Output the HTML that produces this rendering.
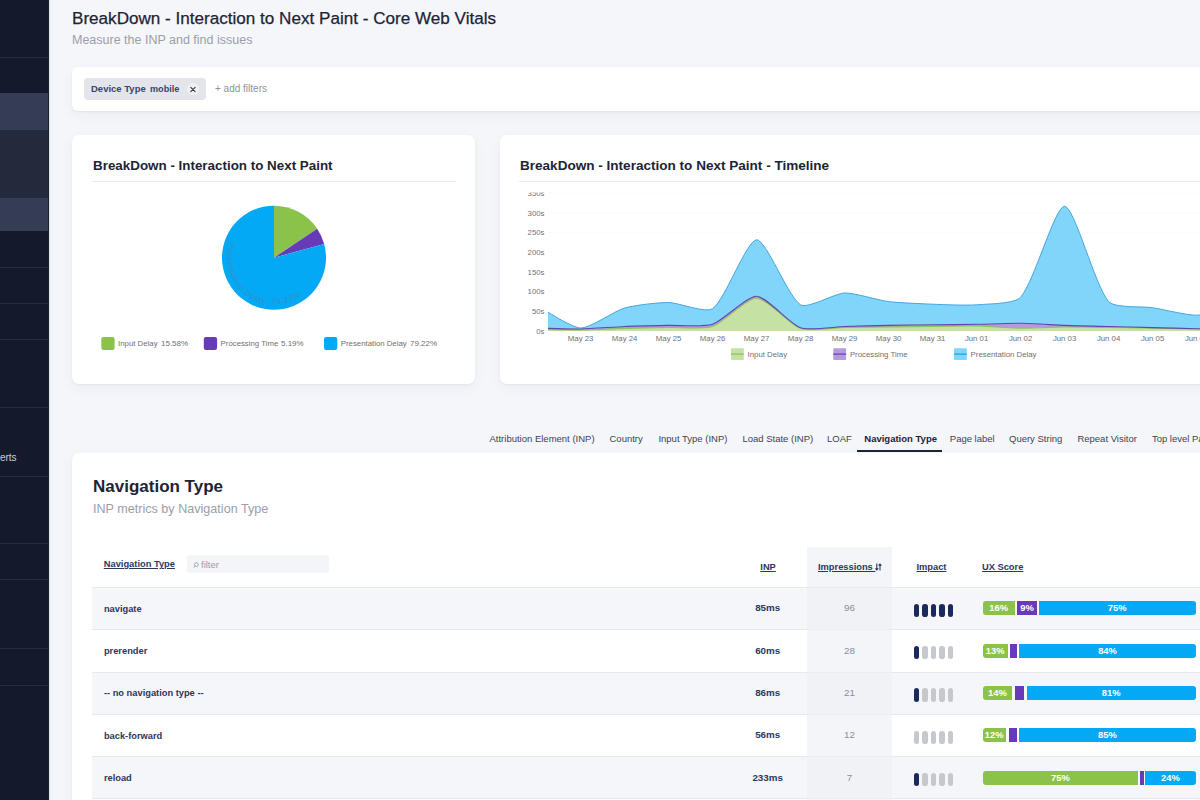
<!DOCTYPE html>
<html><head><meta charset="utf-8">
<style>
*{box-sizing:border-box;margin:0;padding:0}
html,body{width:1200px;height:800px;overflow:hidden}
body{background:#f5f6fa;font-family:"Liberation Sans",sans-serif;position:relative;color:#1c2233}
.a{position:absolute;white-space:nowrap}
#sb{position:absolute;left:0;top:0;width:49px;height:800px;background:#141a2b;border-right:1px solid #1c2130;box-shadow:1px 0 0 #e3e6ef,3px 0 3px #eef1fa}
#sb .ln{position:absolute;left:0;width:48px;height:1px;background:#262d41}
.card{position:absolute;background:#fff;border-radius:7px;box-shadow:0 1px 2px rgba(20,30,60,.05),0 4px 14px rgba(20,30,60,.045)}
</style></head><body>
<div id="sb">
  <div class="ln" style="top:57px"></div>
  <div style="position:absolute;left:0;top:93px;width:48px;height:37px;background:#343d53"></div>
  <div style="position:absolute;left:0;top:130px;width:48px;height:68px;background:#222a3b"></div>
  <div style="position:absolute;left:0;top:198px;width:48px;height:33px;background:#343d53"></div>
  <div class="ln" style="top:267px"></div>
  <div class="ln" style="top:303px"></div>
  <div class="ln" style="top:339px"></div>
  <div class="ln" style="top:407px"></div>
  <div class="a" style="left:-9px;top:452.2px;font-size:10px;color:#cbcfd9">Alerts</div>
  <div class="ln" style="top:476px"></div>
  <div class="ln" style="top:543px"></div>
  <div class="ln" style="top:579px"></div>
  <div class="ln" style="top:648px"></div>
  <div class="ln" style="top:685px"></div>
</div>

<div class="a" style="left:72px;top:8.6px;font-size:17.1px;color:#1d2433;-webkit-text-stroke:0.25px #1d2433">BreakDown - Interaction to Next Paint - Core Web Vitals</div>
<div class="a" style="left:72px;top:32.8px;font-size:12.5px;color:#9a9ea8">Measure the INP and find issues</div>

<!-- filter card -->
<div class="card" style="left:72px;top:67px;width:1150px;height:44px;border-radius:6px"></div>
<div class="a" style="left:84px;top:78px;width:122px;height:22px;background:#e3e5eb;border-radius:4px"></div>
<div class="a" style="left:91px;top:83px;font-size:9.5px;font-weight:bold;color:#3a4468">Device Type</div>
<div class="a" style="left:150px;top:84px;font-size:9.1px;font-weight:bold;color:#3a4468">mobile</div>
<div class="a" style="left:186.7px;top:83px;width:12px;height:12px;border-radius:50%;background:#eef0f3"></div>
<svg class="a" style="left:188px;top:84px" width="10" height="10" viewBox="188 84 10 10"><path d="M190.8 87.3 L195.1 91.6 M195.1 87.3 L190.8 91.6" stroke="#3a3d48" stroke-width="1.1" stroke-linecap="round"/></svg>
<div class="a" style="left:215px;top:83px;font-size:10px;color:#8d919b">+ add filters</div>

<!-- pie card -->
<div class="card" style="left:72px;top:135px;width:403px;height:249px"></div>
<div class="a" style="left:93px;top:157.5px;font-size:13.4px;font-weight:bold;color:#1d2433">BreakDown - Interaction to Next Paint</div>
<div class="a" style="left:92px;top:181px;width:364px;height:1px;background:#e8e9ee"></div>

<!-- timeline card -->
<div class="card" style="left:500px;top:135px;width:750px;height:249px"></div>
<div class="a" style="left:520px;top:157.5px;font-size:13.55px;font-weight:bold;color:#1d2433">BreakDown - Interaction to Next Paint - Timeline</div>
<div class="a" style="left:519px;top:181px;width:700px;height:1px;background:#e8e9ee"></div>

<!-- nav card -->
<div class="card" style="left:72px;top:453px;width:1150px;height:400px"></div>
<div class="a" style="left:93px;top:476.5px;font-size:17px;font-weight:bold;color:#1d2433">Navigation Type</div>
<div class="a" style="left:93px;top:501.5px;font-size:12.6px;color:#9a9ea8">INP metrics by Navigation Type</div>

<div class="a" style="left:489.5px;top:432.5px;font-size:9.5px;line-height:11px;color:#3d4251;;z-index:3">Attribution Element (INP)</div>
<div class="a" style="left:609.5px;top:432.5px;font-size:9.5px;line-height:11px;color:#3d4251;;z-index:3">Country</div>
<div class="a" style="left:658.4px;top:432.5px;font-size:9.5px;line-height:11px;color:#3d4251;;z-index:3">Input Type (INP)</div>
<div class="a" style="left:742.4px;top:432.5px;font-size:9.5px;line-height:11px;color:#3d4251;;z-index:3">Load State (INP)</div>
<div class="a" style="left:827.0px;top:432.5px;font-size:9.5px;line-height:11px;color:#3d4251;;z-index:3">LOAF</div>
<div class="a" style="left:864.3px;top:432.5px;font-size:9.5px;line-height:11px;color:#1d2433;font-weight:bold;z-index:3">Navigation Type</div>
<div class="a" style="left:949.8px;top:432.5px;font-size:9.5px;line-height:11px;color:#3d4251;;z-index:3">Page label</div>
<div class="a" style="left:1009.0px;top:432.5px;font-size:9.5px;line-height:11px;color:#3d4251;;z-index:3">Query String</div>
<div class="a" style="left:1077.4px;top:432.5px;font-size:9.5px;line-height:11px;color:#3d4251;;z-index:3">Repeat Visitor</div>
<div class="a" style="left:1151.9px;top:432.5px;font-size:9.5px;line-height:11px;color:#3d4251;;z-index:3">Top level Page</div>
<div class="a" style="left:857.4px;top:450px;width:85px;height:2px;background:#1d2433;z-index:3"></div>
<div class="a" style="left:806.5px;top:546.5px;width:85.5px;height:260px;background:#eef0f4;opacity:.65;z-index:2"></div>
<div class="a" style="left:103.8px;top:559px;font-size:9.3px;line-height:11px;font-weight:bold;color:#2c3760;text-decoration:underline;z-index:3">Navigation Type</div>
<div class="a" style="left:186.6px;top:555px;width:142.4px;height:18px;background:#f4f5f8;border-radius:3px;z-index:3"></div>
<div class="a" style="left:193px;top:558.5px;font-size:9.5px;line-height:11px;color:#9a9ea8;z-index:3"><svg width="6" height="8" viewBox="0 0 6 8" style="vertical-align:-1px;margin-right:2px"><circle cx="3.4" cy="3.6" r="1.9" fill="none" stroke="#9a9ea8" stroke-width="0.9"/><path d="M2 5 L0.8 6.6" stroke="#9a9ea8" stroke-width="0.9"/></svg>filter</div>
<div class="a" style="left:760.3px;top:562px;font-size:9.3px;line-height:11px;font-weight:bold;color:#2c3760;text-decoration:underline;z-index:3">INP</div>
<div class="a" style="left:818.0px;top:562px;font-size:9.3px;line-height:11px;font-weight:bold;color:#2c3760;text-decoration:underline;z-index:3">Impressions <svg width="7" height="8" viewBox="0 0 7 8" style="vertical-align:-0.5px"><path d="M1.8 0.5 V7 M0.4 5.4 L1.8 7 L3.2 5.4 M5 7.5 V1 M3.6 2.6 L5 1 L6.4 2.6" fill="none" stroke="#2c3760" stroke-width="1.1"/></svg></div>
<div class="a" style="left:916.5px;top:562px;font-size:9.3px;line-height:11px;font-weight:bold;color:#2c3760;text-decoration:underline;z-index:3">Impact</div>
<div class="a" style="left:982.0px;top:562px;font-size:9.3px;line-height:11px;font-weight:bold;color:#2c3760;text-decoration:underline;z-index:3">UX Score</div>
<div class="a" style="left:92.4px;top:587px;width:1120px;height:1px;background:#e7e8ec;z-index:3"></div>
<div class="a" style="left:92.4px;top:588.0px;width:1120px;height:42.3px;background:#f5f6f9;border-bottom:1px solid #e7e8ec;z-index:1"></div>
<div class="a" style="left:103.9px;top:603.7px;font-size:9.3px;line-height:11px;font-weight:bold;color:#2c3760;z-index:3">navigate</div>
<div class="a" style="left:727.7px;width:80px;text-align:center;top:602.4px;font-size:9.8px;line-height:11px;font-weight:bold;color:#2c3760;z-index:3">85ms</div>
<div class="a" style="left:809.5px;width:80px;text-align:center;top:602.4px;font-size:9.8px;line-height:11px;color:#8a8e99;z-index:3">96</div>
<div class="a" style="left:913.50px;top:603.8px;width:5.6px;height:13.4px;border-radius:2.8px;background:#1b2a5c;z-index:3"></div>
<div class="a" style="left:922.05px;top:603.8px;width:5.6px;height:13.4px;border-radius:2.8px;background:#1b2a5c;z-index:3"></div>
<div class="a" style="left:930.60px;top:603.8px;width:5.6px;height:13.4px;border-radius:2.8px;background:#1b2a5c;z-index:3"></div>
<div class="a" style="left:939.15px;top:603.8px;width:5.6px;height:13.4px;border-radius:2.8px;background:#1b2a5c;z-index:3"></div>
<div class="a" style="left:947.70px;top:603.8px;width:5.6px;height:13.4px;border-radius:2.8px;background:#1b2a5c;z-index:3"></div>
<div class="a" style="left:982.5px;top:601.4px;width:32.5px;height:14px;border-radius:3px 0 0 3px;background:#8bc34a;color:#fff;font-size:9.4px;line-height:14px;font-weight:bold;text-align:center;overflow:hidden;z-index:3">16%</div>
<div class="a" style="left:1017.3px;top:601.4px;width:19.4px;height:14px;border-radius:0;background:#673ab7;color:#fff;font-size:9.4px;line-height:14px;font-weight:bold;text-align:center;overflow:hidden;z-index:3">9%</div>
<div class="a" style="left:1038.6px;top:601.4px;width:157.2px;height:14px;border-radius:0 3px 3px 0;background:#03a9f4;color:#fff;font-size:9.4px;line-height:14px;font-weight:bold;text-align:center;overflow:hidden;z-index:3">75%</div>
<div class="a" style="left:92.4px;top:630.3px;width:1120px;height:42.3px;background:#ffffff;border-bottom:1px solid #e7e8ec;z-index:1"></div>
<div class="a" style="left:103.9px;top:646.0px;font-size:9.3px;line-height:11px;font-weight:bold;color:#2c3760;z-index:3">prerender</div>
<div class="a" style="left:727.7px;width:80px;text-align:center;top:644.7px;font-size:9.8px;line-height:11px;font-weight:bold;color:#2c3760;z-index:3">60ms</div>
<div class="a" style="left:809.5px;width:80px;text-align:center;top:644.7px;font-size:9.8px;line-height:11px;color:#8a8e99;z-index:3">28</div>
<div class="a" style="left:913.50px;top:646.1px;width:5.6px;height:13.4px;border-radius:2.8px;background:#1b2a5c;z-index:3"></div>
<div class="a" style="left:922.05px;top:646.1px;width:5.6px;height:13.4px;border-radius:2.8px;background:#c6c8ce;z-index:3"></div>
<div class="a" style="left:930.60px;top:646.1px;width:5.6px;height:13.4px;border-radius:2.8px;background:#c6c8ce;z-index:3"></div>
<div class="a" style="left:939.15px;top:646.1px;width:5.6px;height:13.4px;border-radius:2.8px;background:#c6c8ce;z-index:3"></div>
<div class="a" style="left:947.70px;top:646.1px;width:5.6px;height:13.4px;border-radius:2.8px;background:#c6c8ce;z-index:3"></div>
<div class="a" style="left:982.5px;top:643.7px;width:25.5px;height:14px;border-radius:3px 0 0 3px;background:#8bc34a;color:#fff;font-size:9.4px;line-height:14px;font-weight:bold;text-align:center;overflow:hidden;z-index:3">13%</div>
<div class="a" style="left:1010.0px;top:643.7px;width:7.2px;height:14px;border-radius:0;background:#673ab7;color:#fff;font-size:9.4px;line-height:14px;font-weight:bold;text-align:center;overflow:hidden;z-index:3"></div>
<div class="a" style="left:1019.3px;top:643.7px;width:176.5px;height:14px;border-radius:0 3px 3px 0;background:#03a9f4;color:#fff;font-size:9.4px;line-height:14px;font-weight:bold;text-align:center;overflow:hidden;z-index:3">84%</div>
<div class="a" style="left:92.4px;top:672.6px;width:1120px;height:42.3px;background:#f5f6f9;border-bottom:1px solid #e7e8ec;z-index:1"></div>
<div class="a" style="left:103.9px;top:688.3px;font-size:9.3px;line-height:11px;font-weight:bold;color:#2c3760;z-index:3">-- no navigation type --</div>
<div class="a" style="left:727.7px;width:80px;text-align:center;top:687.0px;font-size:9.8px;line-height:11px;font-weight:bold;color:#2c3760;z-index:3">86ms</div>
<div class="a" style="left:809.5px;width:80px;text-align:center;top:687.0px;font-size:9.8px;line-height:11px;color:#8a8e99;z-index:3">21</div>
<div class="a" style="left:913.50px;top:688.4px;width:5.6px;height:13.4px;border-radius:2.8px;background:#1b2a5c;z-index:3"></div>
<div class="a" style="left:922.05px;top:688.4px;width:5.6px;height:13.4px;border-radius:2.8px;background:#c6c8ce;z-index:3"></div>
<div class="a" style="left:930.60px;top:688.4px;width:5.6px;height:13.4px;border-radius:2.8px;background:#c6c8ce;z-index:3"></div>
<div class="a" style="left:939.15px;top:688.4px;width:5.6px;height:13.4px;border-radius:2.8px;background:#c6c8ce;z-index:3"></div>
<div class="a" style="left:947.70px;top:688.4px;width:5.6px;height:13.4px;border-radius:2.8px;background:#c6c8ce;z-index:3"></div>
<div class="a" style="left:982.5px;top:686.0px;width:29.7px;height:14px;border-radius:3px 0 0 3px;background:#8bc34a;color:#fff;font-size:9.4px;line-height:14px;font-weight:bold;text-align:center;overflow:hidden;z-index:3">14%</div>
<div class="a" style="left:1014.5px;top:686.0px;width:9.7px;height:14px;border-radius:0;background:#673ab7;color:#fff;font-size:9.4px;line-height:14px;font-weight:bold;text-align:center;overflow:hidden;z-index:3"></div>
<div class="a" style="left:1026.5px;top:686.0px;width:169.3px;height:14px;border-radius:0 3px 3px 0;background:#03a9f4;color:#fff;font-size:9.4px;line-height:14px;font-weight:bold;text-align:center;overflow:hidden;z-index:3">81%</div>
<div class="a" style="left:92.4px;top:714.9px;width:1120px;height:42.3px;background:#ffffff;border-bottom:1px solid #e7e8ec;z-index:1"></div>
<div class="a" style="left:103.9px;top:730.6px;font-size:9.3px;line-height:11px;font-weight:bold;color:#2c3760;z-index:3">back-forward</div>
<div class="a" style="left:727.7px;width:80px;text-align:center;top:729.3px;font-size:9.8px;line-height:11px;font-weight:bold;color:#2c3760;z-index:3">56ms</div>
<div class="a" style="left:809.5px;width:80px;text-align:center;top:729.3px;font-size:9.8px;line-height:11px;color:#8a8e99;z-index:3">12</div>
<div class="a" style="left:913.50px;top:730.7px;width:5.6px;height:13.4px;border-radius:2.8px;background:#c6c8ce;z-index:3"></div>
<div class="a" style="left:922.05px;top:730.7px;width:5.6px;height:13.4px;border-radius:2.8px;background:#c6c8ce;z-index:3"></div>
<div class="a" style="left:930.60px;top:730.7px;width:5.6px;height:13.4px;border-radius:2.8px;background:#c6c8ce;z-index:3"></div>
<div class="a" style="left:939.15px;top:730.7px;width:5.6px;height:13.4px;border-radius:2.8px;background:#c6c8ce;z-index:3"></div>
<div class="a" style="left:947.70px;top:730.7px;width:5.6px;height:13.4px;border-radius:2.8px;background:#c6c8ce;z-index:3"></div>
<div class="a" style="left:982.5px;top:728.3px;width:23.5px;height:14px;border-radius:3px 0 0 3px;background:#8bc34a;color:#fff;font-size:9.4px;line-height:14px;font-weight:bold;text-align:center;overflow:hidden;z-index:3">12%</div>
<div class="a" style="left:1008.7px;top:728.3px;width:8.1px;height:14px;border-radius:0;background:#673ab7;color:#fff;font-size:9.4px;line-height:14px;font-weight:bold;text-align:center;overflow:hidden;z-index:3"></div>
<div class="a" style="left:1018.9px;top:728.3px;width:176.9px;height:14px;border-radius:0 3px 3px 0;background:#03a9f4;color:#fff;font-size:9.4px;line-height:14px;font-weight:bold;text-align:center;overflow:hidden;z-index:3">85%</div>
<div class="a" style="left:92.4px;top:757.2px;width:1120px;height:42.3px;background:#f5f6f9;border-bottom:1px solid #e7e8ec;z-index:1"></div>
<div class="a" style="left:103.9px;top:772.9px;font-size:9.3px;line-height:11px;font-weight:bold;color:#2c3760;z-index:3">reload</div>
<div class="a" style="left:727.7px;width:80px;text-align:center;top:771.6px;font-size:9.8px;line-height:11px;font-weight:bold;color:#2c3760;z-index:3">233ms</div>
<div class="a" style="left:809.5px;width:80px;text-align:center;top:771.6px;font-size:9.8px;line-height:11px;color:#8a8e99;z-index:3">7</div>
<div class="a" style="left:913.50px;top:773.0px;width:5.6px;height:13.4px;border-radius:2.8px;background:#1b2a5c;z-index:3"></div>
<div class="a" style="left:922.05px;top:773.0px;width:5.6px;height:13.4px;border-radius:2.8px;background:#c6c8ce;z-index:3"></div>
<div class="a" style="left:930.60px;top:773.0px;width:5.6px;height:13.4px;border-radius:2.8px;background:#c6c8ce;z-index:3"></div>
<div class="a" style="left:939.15px;top:773.0px;width:5.6px;height:13.4px;border-radius:2.8px;background:#c6c8ce;z-index:3"></div>
<div class="a" style="left:947.70px;top:773.0px;width:5.6px;height:13.4px;border-radius:2.8px;background:#c6c8ce;z-index:3"></div>
<div class="a" style="left:982.5px;top:770.6px;width:155.8px;height:14px;border-radius:3px 0 0 3px;background:#8bc34a;color:#fff;font-size:9.4px;line-height:14px;font-weight:bold;text-align:center;overflow:hidden;z-index:3">75%</div>
<div class="a" style="left:1140.0px;top:770.6px;width:3.5px;height:14px;border-radius:0;background:#673ab7;color:#fff;font-size:9.4px;line-height:14px;font-weight:bold;text-align:center;overflow:hidden;z-index:3"></div>
<div class="a" style="left:1145.0px;top:770.6px;width:50.8px;height:14px;border-radius:0 3px 3px 0;background:#03a9f4;color:#fff;font-size:9.4px;line-height:14px;font-weight:bold;text-align:center;overflow:hidden;z-index:3">24%</div>
<svg class="a" style="left:0;top:0" width="1200" height="800" viewBox="0 0 1200 800"><line x1="548" x2="1200" y1="311.3" y2="311.3" stroke="#f7f8fa" stroke-width="0.8" stroke-dasharray="5 3"/>
<line x1="548" x2="1200" y1="291.6" y2="291.6" stroke="#f7f8fa" stroke-width="0.8" stroke-dasharray="5 3"/>
<line x1="548" x2="1200" y1="271.9" y2="271.9" stroke="#f7f8fa" stroke-width="0.8" stroke-dasharray="5 3"/>
<line x1="548" x2="1200" y1="252.2" y2="252.2" stroke="#f7f8fa" stroke-width="0.8" stroke-dasharray="5 3"/>
<line x1="548" x2="1200" y1="232.5" y2="232.5" stroke="#f7f8fa" stroke-width="0.8" stroke-dasharray="5 3"/>
<line x1="548" x2="1200" y1="212.8" y2="212.8" stroke="#f7f8fa" stroke-width="0.8" stroke-dasharray="5 3"/>
<line x1="548" x2="1200" y1="193.1" y2="193.1" stroke="#f7f8fa" stroke-width="0.8" stroke-dasharray="5 3"/>
<clipPath id="pc"><rect x="548" y="150" width="700" height="181.5"/></clipPath>
<g clip-path="url(#pc)">
<path d="M536.6 329.5 C536.6 329.5 570.9 330.1 580.6 330.0 C590.3 329.9 614.9 328.8 624.6 328.5 C634.3 328.2 658.9 327.7 668.6 327.5 C678.3 327.3 703.7 329.4 712.6 326.5 C723.1 323.0 747.0 298.1 756.6 298.3 C766.4 298.5 790.0 325.0 800.6 328.5 C809.3 331.4 834.9 327.7 844.6 327.5 C854.3 327.3 878.9 327.1 888.6 327.0 C898.3 326.9 922.9 326.6 932.6 326.5 C942.3 326.4 966.9 325.8 976.6 326.0 C986.3 326.2 1010.9 328.1 1020.6 328.2 C1030.3 328.3 1054.9 327.1 1064.6 327.0 C1074.3 326.9 1098.9 327.4 1108.6 327.5 C1118.3 327.6 1142.9 328.0 1152.6 328.2 C1162.3 328.4 1186.9 328.9 1196.6 329.0 C1206.3 329.1 1240.6 329.5 1240.6 329.5 L1240.6 331.0 C1240.6 331.0 1206.3 331.0 1196.6 331.0 C1186.9 331.0 1162.3 331.0 1152.6 331.0 C1142.9 331.0 1118.3 331.0 1108.6 331.0 C1098.9 331.0 1074.3 331.0 1064.6 331.0 C1054.9 331.0 1030.3 331.0 1020.6 331.0 C1010.9 331.0 986.3 331.0 976.6 331.0 C966.9 331.0 942.3 331.0 932.6 331.0 C922.9 331.0 898.3 331.0 888.6 331.0 C878.9 331.0 854.3 331.0 844.6 331.0 C834.9 331.0 810.3 331.0 800.6 331.0 C790.9 331.0 766.3 331.0 756.6 331.0 C746.9 331.0 722.3 331.0 712.6 331.0 C702.9 331.0 678.3 331.0 668.6 331.0 C658.9 331.0 634.3 331.0 624.6 331.0 C614.9 331.0 590.3 331.0 580.6 331.0 C570.9 331.0 536.6 331.0 536.6 331.0 Z" fill="#c5e1a4"/>
<path d="M536.6 328.0 C536.6 328.0 570.9 329.2 580.6 329.0 C590.3 328.8 614.9 326.9 624.6 326.5 C634.3 326.1 658.9 325.6 668.6 325.4 C678.3 325.2 703.7 327.2 712.6 324.3 C723.1 320.8 747.1 295.8 756.6 296.2 C766.5 296.6 789.9 324.1 800.6 327.8 C809.3 330.8 834.9 326.8 844.6 326.5 C854.3 326.2 878.9 325.6 888.6 325.4 C898.3 325.2 922.9 324.9 932.6 324.8 C942.3 324.7 966.9 324.5 976.6 324.3 C986.3 324.1 1010.9 323.2 1020.6 323.3 C1030.3 323.4 1054.9 325.0 1064.6 325.4 C1074.3 325.8 1098.9 326.3 1108.6 326.5 C1118.3 326.7 1142.9 327.4 1152.6 327.6 C1162.3 327.8 1186.9 328.5 1196.6 328.7 C1206.3 328.9 1240.6 329.0 1240.6 329.0 L1240.6 329.5 C1240.6 329.5 1206.3 329.1 1196.6 329.0 C1186.9 328.9 1162.3 328.4 1152.6 328.2 C1142.9 328.0 1118.3 327.6 1108.6 327.5 C1098.9 327.4 1074.3 326.9 1064.6 327.0 C1054.9 327.1 1030.3 328.3 1020.6 328.2 C1010.9 328.1 986.3 326.2 976.6 326.0 C966.9 325.8 942.3 326.4 932.6 326.5 C922.9 326.6 898.3 326.9 888.6 327.0 C878.9 327.1 854.3 327.3 844.6 327.5 C834.9 327.7 809.3 331.4 800.6 328.5 C790.0 325.0 766.4 298.5 756.6 298.3 C747.0 298.1 723.1 323.0 712.6 326.5 C703.7 329.4 678.3 327.3 668.6 327.5 C658.9 327.7 634.3 328.2 624.6 328.5 C614.9 328.8 590.3 329.9 580.6 330.0 C570.9 330.1 536.6 329.5 536.6 329.5 Z" fill="#b39cdb"/>
<path d="M536.6 305.0 C536.6 305.0 570.8 327.7 580.6 328.0 C590.1 328.3 614.5 310.9 624.6 308.0 C633.9 305.3 658.9 302.4 668.6 302.5 C678.3 302.6 705.8 313.6 712.6 308.7 C725.1 299.8 746.7 240.2 756.6 239.8 C766.1 239.4 788.3 297.4 800.6 304.8 C807.7 309.1 834.8 293.4 844.6 293.0 C854.2 292.7 878.8 300.4 888.6 301.6 C898.2 302.8 922.9 303.8 932.6 304.2 C942.3 304.6 967.0 305.6 976.6 304.8 C986.3 304.0 1014.7 303.9 1020.6 297.3 C1034.0 282.3 1055.1 205.8 1064.6 206.2 C1074.5 206.7 1095.0 285.9 1108.6 301.6 C1114.4 308.2 1142.9 306.2 1152.6 307.7 C1162.3 309.2 1187.0 315.4 1196.6 315.2 C1206.3 315.0 1240.6 306.0 1240.6 306.0 L1240.6 329.0 C1240.6 329.0 1206.3 328.9 1196.6 328.7 C1186.9 328.5 1162.3 327.8 1152.6 327.6 C1142.9 327.4 1118.3 326.7 1108.6 326.5 C1098.9 326.3 1074.3 325.8 1064.6 325.4 C1054.9 325.0 1030.3 323.4 1020.6 323.3 C1010.9 323.2 986.3 324.1 976.6 324.3 C966.9 324.5 942.3 324.7 932.6 324.8 C922.9 324.9 898.3 325.2 888.6 325.4 C878.9 325.6 854.3 326.2 844.6 326.5 C834.9 326.8 809.3 330.8 800.6 327.8 C789.9 324.1 766.5 296.6 756.6 296.2 C747.1 295.8 723.1 320.8 712.6 324.3 C703.7 327.2 678.3 325.2 668.6 325.4 C658.9 325.6 634.3 326.1 624.6 326.5 C614.9 326.9 590.3 328.8 580.6 329.0 C570.9 329.2 536.6 328.0 536.6 328.0 Z" fill="#81d4fa"/>
<path d="M536.6 329.5 C536.6 329.5 570.9 330.1 580.6 330.0 C590.3 329.9 614.9 328.8 624.6 328.5 C634.3 328.2 658.9 327.7 668.6 327.5 C678.3 327.3 703.7 329.4 712.6 326.5 C723.1 323.0 747.0 298.1 756.6 298.3 C766.4 298.5 790.0 325.0 800.6 328.5 C809.3 331.4 834.9 327.7 844.6 327.5 C854.3 327.3 878.9 327.1 888.6 327.0 C898.3 326.9 922.9 326.6 932.6 326.5 C942.3 326.4 966.9 325.8 976.6 326.0 C986.3 326.2 1010.9 328.1 1020.6 328.2 C1030.3 328.3 1054.9 327.1 1064.6 327.0 C1074.3 326.9 1098.9 327.4 1108.6 327.5 C1118.3 327.6 1142.9 328.0 1152.6 328.2 C1162.3 328.4 1186.9 328.9 1196.6 329.0 C1206.3 329.1 1240.6 329.5 1240.6 329.5" fill="none" stroke="#8bc34a" stroke-width="1"/>
<path d="M536.6 328.0 C536.6 328.0 570.9 329.2 580.6 329.0 C590.3 328.8 614.9 326.9 624.6 326.5 C634.3 326.1 658.9 325.6 668.6 325.4 C678.3 325.2 703.7 327.2 712.6 324.3 C723.1 320.8 747.1 295.8 756.6 296.2 C766.5 296.6 789.9 324.1 800.6 327.8 C809.3 330.8 834.9 326.8 844.6 326.5 C854.3 326.2 878.9 325.6 888.6 325.4 C898.3 325.2 922.9 324.9 932.6 324.8 C942.3 324.7 966.9 324.5 976.6 324.3 C986.3 324.1 1010.9 323.2 1020.6 323.3 C1030.3 323.4 1054.9 325.0 1064.6 325.4 C1074.3 325.8 1098.9 326.3 1108.6 326.5 C1118.3 326.7 1142.9 327.4 1152.6 327.6 C1162.3 327.8 1186.9 328.5 1196.6 328.7 C1206.3 328.9 1240.6 329.0 1240.6 329.0" fill="none" stroke="#5e46b0" stroke-width="1.1"/>
<path d="M536.6 305.0 C536.6 305.0 570.8 327.7 580.6 328.0 C590.1 328.3 614.5 310.9 624.6 308.0 C633.9 305.3 658.9 302.4 668.6 302.5 C678.3 302.6 705.8 313.6 712.6 308.7 C725.1 299.8 746.7 240.2 756.6 239.8 C766.1 239.4 788.3 297.4 800.6 304.8 C807.7 309.1 834.8 293.4 844.6 293.0 C854.2 292.7 878.8 300.4 888.6 301.6 C898.2 302.8 922.9 303.8 932.6 304.2 C942.3 304.6 967.0 305.6 976.6 304.8 C986.3 304.0 1014.7 303.9 1020.6 297.3 C1034.0 282.3 1055.1 205.8 1064.6 206.2 C1074.5 206.7 1095.0 285.9 1108.6 301.6 C1114.4 308.2 1142.9 306.2 1152.6 307.7 C1162.3 309.2 1187.0 315.4 1196.6 315.2 C1206.3 315.0 1240.6 306.0 1240.6 306.0" fill="none" stroke="#45a6de" stroke-width="1"/>
</g>
<clipPath id="yc"><rect x="500" y="192.5" width="60" height="160"/></clipPath>
<g clip-path="url(#yc)" font-family="Liberation Sans" font-size="7.8" fill="#6e7079" text-anchor="end">
<text x="544.5" y="333.8">0s</text>
<text x="544.5" y="314.1">50s</text>
<text x="544.5" y="294.4">100s</text>
<text x="544.5" y="274.7">150s</text>
<text x="544.5" y="255.0">200s</text>
<text x="544.5" y="235.3">250s</text>
<text x="544.5" y="215.6">300s</text>
<text x="544.5" y="195.9">350s</text>
</g>
<g font-family="Liberation Sans" font-size="7.8" fill="#6e7079" text-anchor="middle">
<text x="580.6" y="340.8">May 23</text>
<text x="624.6" y="340.8">May 24</text>
<text x="668.6" y="340.8">May 25</text>
<text x="712.6" y="340.8">May 26</text>
<text x="756.6" y="340.8">May 27</text>
<text x="800.6" y="340.8">May 28</text>
<text x="844.6" y="340.8">May 29</text>
<text x="888.6" y="340.8">May 30</text>
<text x="932.6" y="340.8">May 31</text>
<text x="976.6" y="340.8">Jun 01</text>
<text x="1020.6" y="340.8">Jun 02</text>
<text x="1064.6" y="340.8">Jun 03</text>
<text x="1108.6" y="340.8">Jun 04</text>
<text x="1152.6" y="340.8">Jun 05</text>
<text x="1196.6" y="340.8">Jun 06</text>
<text x="1240.6" y="340.8">Jun 07</text>
</g>
<path d="M274.00 257.70 L274.00 205.70 A52 52 0 0 1 317.15 228.69 Z" fill="#8bc34a"/>
<path d="M274.00 257.70 L317.15 228.69 A52 52 0 0 1 324.17 244.04 Z" fill="#673ab7"/>
<path d="M274.00 257.70 L324.17 244.04 A52 52 0 1 1 274.00 205.70 Z" fill="#03a9f4"/>
<path id="arcp" d="M229.94 242.53 A46.6 46.6 0 0 0 317.79 273.64" fill="none"/>
<text font-family="Liberation Sans" font-size="7.9" fill="#3a8ec2" letter-spacing="0.75"><textPath href="#arcp">Presentation Delay&#160; 79.22%</textPath></text>
<rect x="101.3" y="337" width="13.3" height="13" rx="2.2" fill="#8bc34a"/>
<text x="118.1" y="346.4" font-family="Liberation Sans" font-size="7.8" fill="#707070">Input Delay</text>
<text x="161.0" y="346.4" font-family="Liberation Sans" font-size="8" fill="#707070">15.58%</text>
<rect x="203.8" y="337" width="13.3" height="13" rx="2.2" fill="#673ab7"/>
<text x="220.6" y="346.4" font-family="Liberation Sans" font-size="7.8" fill="#707070">Processing Time</text>
<text x="281.0" y="346.4" font-family="Liberation Sans" font-size="8" fill="#707070">5.19%</text>
<rect x="324.0" y="337" width="13.3" height="13" rx="2.2" fill="#03a9f4"/>
<text x="340.8" y="346.4" font-family="Liberation Sans" font-size="7.8" fill="#707070">Presentation Delay</text>
<text x="410.0" y="346.4" font-family="Liberation Sans" font-size="8" fill="#707070">79.22%</text>
<rect x="731.0" y="348.2" width="12.8" height="11.8" rx="1" fill="#c5e1a4"/>
<line x1="731.0" x2="743.8" y1="354.1" y2="354.1" stroke="#8bc34a" stroke-width="1.2"/>
<text x="747.6" y="356.9" font-family="Liberation Sans" font-size="7.8" fill="#707070">Input Delay</text>
<rect x="833.3" y="348.2" width="12.8" height="11.8" rx="1" fill="#b39cdb"/>
<line x1="833.3" x2="846.1" y1="354.1" y2="354.1" stroke="#673ab7" stroke-width="1.2"/>
<text x="849.9" y="356.9" font-family="Liberation Sans" font-size="7.8" fill="#707070">Processing Time</text>
<rect x="954.0" y="348.2" width="12.8" height="11.8" rx="1" fill="#81d4fa"/>
<line x1="954.0" x2="966.8" y1="354.1" y2="354.1" stroke="#03a9f4" stroke-width="1.2"/>
<text x="970.6" y="356.9" font-family="Liberation Sans" font-size="7.8" fill="#707070">Presentation Delay</text></svg>
</body></html>
